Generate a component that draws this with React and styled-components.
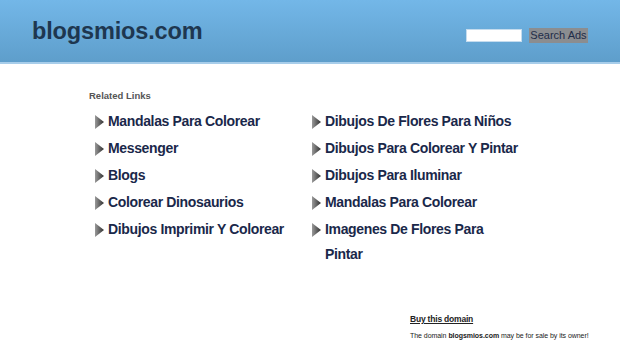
import React from "react";
import styled, { createGlobalStyle } from "styled-components";

const Global = createGlobalStyle`
  html, body { margin: 0; padding: 0; background: #fff; }
  body { font-family: "Liberation Sans", Arial, sans-serif; }
`;

const Header = styled.header`
  height: 62px;
  background: linear-gradient(#73b7e8, #5e9ecb);
  border-bottom: 2px solid #a7cdea;
  display: flex;
  align-items: center;
  justify-content: space-between;
  padding: 0 32px 0 32px;
  box-sizing: content-box;
`;

const Logo = styled.div`
  font-size: 23.5px;
  font-weight: bold;
  color: #1e3750;
  letter-spacing: -0.15px;
  margin-top: 0;
`;

const SearchForm = styled.form`
  display: flex;
  align-items: center;
  gap: 7px;
  margin-top: 8px;
`;

const SearchInput = styled.input`
  width: 54px;
  height: 11px;
  padding: 0;
  border: 1px solid #c5dcee;
  background: #fff;
  outline: none;
`;

const SearchButton = styled.button`
  width: 59px;
  height: 15px;
  padding: 0;
  border: none;
  background: #8b8d90;
  color: #1f2c48;
  font-family: "Liberation Sans", Arial, sans-serif;
  font-size: 11px;
  line-height: 15px;
`;

const Main = styled.main`
  padding: 26px 0 0 89px;
`;

const Heading = styled.div`
  font-size: 9.5px;
  font-weight: bold;
  color: #555;
  line-height: 12px;
`;

const Columns = styled.div`
  display: grid;
  grid-template-columns: 217px 217px;
  margin-top: 7px;
`;

const List = styled.ul`
  list-style: none;
  margin: 0;
  padding: 0;
`;

const Item = styled.li`
  display: flex;
  align-items: flex-start;
  margin-bottom: 2px;
`;

const Arrow = styled.svg`
  width: 9px;
  height: 14px;
  margin: 6px 4px 0 6px;
  flex: none;
`;

const Link = styled.a`
  font-size: 14px;
  font-weight: bold;
  letter-spacing: -0.35px;
  color: #1a284a;
  text-decoration: none;
  line-height: 25px;
  max-width: ${(p) => p.$max}px;
`;

const Footer = styled.div`
  margin: 44px 0 0 410px;
  font-size: 8px;
  color: #222;
`;

const Buy = styled.a`
  display: block;
  font-weight: bold;
  color: #222;
  text-decoration: underline;
  font-size: 8.5px;
  letter-spacing: -0.2px;
  line-height: 12px;
`;

const Notice = styled.p`
  margin: 5px 0 0;
  font-size: 7px;
  letter-spacing: -0.05px;
  line-height: 12px;
`;

const ArrowIcon = () => (
  <Arrow viewBox="0 0 9 14">
    <defs>
      <linearGradient id="ag" x1="0" y1="0" x2="1" y2="0">
        <stop offset="0" stopColor="#9a9a9a" />
        <stop offset="1" stopColor="#2f2f2f" />
      </linearGradient>
    </defs>
    <polygon points="0,0 9,7 0,14" fill="url(#ag)" />
  </Arrow>
);

const col1 = [
  "Mandalas Para Colorear",
  "Messenger",
  "Blogs",
  "Colorear Dinosaurios",
  "Dibujos Imprimir Y Colorear",
];
const col2 = [
  "Dibujos De Flores Para Niños",
  "Dibujos Para Colorear Y Pintar",
  "Dibujos Para Iluminar",
  "Mandalas Para Colorear",
  "Imagenes De Flores Para Pintar",
];

const Column = ({ items }) => (
  <List>
    {items.map((t, i) => (
      <Item key={i}>
        <ArrowIcon />
        <Link href="#" $max={196}>{t}</Link>
      </Item>
    ))}
  </List>
);

export default function App() {
  return (
    <>
      <Global />
      <Header>
        <Logo>blogsmios.com</Logo>
        <SearchForm onSubmit={(e) => e.preventDefault()}>
          <SearchInput type="text" />
          <SearchButton type="submit">Search Ads</SearchButton>
        </SearchForm>
      </Header>
      <Main>
        <Heading>Related Links</Heading>
        <Columns>
          <Column items={col1} />
          <Column items={col2} />
        </Columns>
      </Main>
      <Footer>
        <Buy href="#">Buy this domain</Buy>
        <Notice>
          The domain <b>blogsmios.com</b> may be for sale by its owner!
        </Notice>
      </Footer>
    </>
  );
}
